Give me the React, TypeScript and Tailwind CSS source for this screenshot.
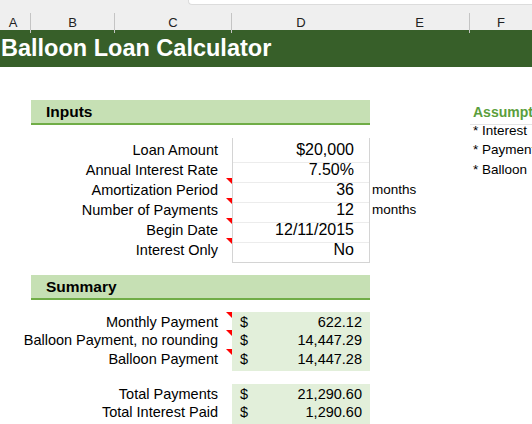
const cols = "grid grid-cols-[31px_84px_117px_138px_100px_1fr]";

function Marker() {
	return (
		<span className="absolute right-0 top-0 h-0 w-0 border-l-[6px] border-t-[6px] border-l-transparent border-t-[#ff0000]" />
	);
}

const inputs = [
	{ label: "Loan Amount", value: "$20,000", note: "", mark: false },
	{ label: "Annual Interest Rate", value: "7.50%", note: "", mark: false },
	{ label: "Amortization Period", value: "36", note: "months", mark: true },
	{ label: "Number of Payments", value: "12", note: "months", mark: true },
	{ label: "Begin Date", value: "12/11/2015", note: "", mark: true },
	{ label: "Interest Only", value: "No", note: "", mark: true },
];

const summary = [
	{ label: "Monthly Payment", value: "622.12", h: "h-[18px]" },
	{ label: "Balloon Payment, no rounding", value: "14,447.29", h: "h-[19px]" },
	{ label: "Balloon Payment", value: "14,447.28", h: "h-[18px]" },
];

const totals = [
	{ label: "Total Payments", value: "21,290.60", h: "h-[18px]" },
	{ label: "Total Interest Paid", value: "1,290.60", h: "h-[19px]" },
];

function SectionHeader({ title, side }: { title: string; side?: boolean }) {
	return (
		<div className={`${cols} h-[21px]`}>
			<div />
			<div className="col-span-3 flex items-center border-b-2 border-[#70ad47] bg-[#c6e0b4] pl-[15px] text-[15.5px] font-bold text-black">
				{title}
			</div>
			<div />
			{side ? (
				<div className="flex items-center overflow-hidden border-b border-[#e4e4e4] pl-[3px] text-[14px] font-bold whitespace-nowrap text-[#5a9e3c]">
					Assumptions
				</div>
			) : (
				<div />
			)}
		</div>
	);
}

function SummaryRow({ label, value, h, mark }: { label: string; value: string; h: string; mark: boolean }) {
	return (
		<div className={`${cols} ${h}`}>
			<div />
			<div className="relative col-span-2 flex items-center justify-end pr-[14px] whitespace-nowrap">
				{label}
				{mark && <Marker />}
			</div>
			<div className="flex items-center justify-between bg-[#e2efda] pl-[8px] pr-[8px]">
				<span>$</span>
				<span>{value}</span>
			</div>
			<div />
			<div />
		</div>
	);
}

export default function App() {
	return (
		<div className="h-[424px] w-[532px] overflow-hidden bg-white font-['Liberation_Sans',Arial,sans-serif] text-[14.5px] text-black">
			{/* column headers */}
			<div className="relative h-[30px] bg-[#efefef]">
				<div className="absolute right-0 top-0 h-[5px] w-[344px] rounded-bl-[4px] border-b border-l border-[#dcdcdc] bg-white" />
				<div className={`${cols} h-full pt-[13px] text-[13px] text-[#222]`}>
					<div className="flex items-center justify-center border-r border-[#c4c4c4] pr-[4px]">A</div>
					<div className="flex items-center justify-center border-r border-[#c4c4c4]">B</div>
					<div className="flex items-center justify-center border-r border-[#c4c4c4]">C</div>
					<div className="flex items-center justify-center">D</div>
					<div className="flex items-center justify-center border-r border-[#c4c4c4]">E</div>
					<div className="flex items-center justify-center">F</div>
				</div>
			</div>

			{/* title */}
			<div className="flex h-[37px] items-center bg-[#375f29] pl-[1px] text-[23.5px] font-bold text-white">
				Balloon Loan Calculator
			</div>

			<div className="h-[33px]" />
			<SectionHeader title="Inputs" side />
			<div className={`${cols} h-[17px]`}>
				<div />
				<div />
				<div />
				<div />
				<div />
				<div className="flex items-center pl-[3px] text-[13.5px] whitespace-nowrap">* Interest</div>
			</div>

			{inputs.map((r, i) => (
				<div key={r.label} className={`${cols} h-[20px]`}>
					<div />
					<div className="relative col-span-2 flex items-center justify-end pr-[14px] whitespace-nowrap">
						{r.label}
						{r.mark && <Marker />}
					</div>
					<div
						className={`flex items-center justify-end border-x border-[#d4d4d4] pr-[15px] text-[16px] ${
							i < inputs.length - 1 ? "border-b border-b-[#ececec]" : "border-b border-b-[#d4d4d4]"
						}`}
					>
						{r.value}
					</div>
					<div className="flex items-center pl-[2px] text-[13.5px]">{r.note}</div>
					<div className="flex items-center overflow-hidden pl-[3px] text-[13.5px] whitespace-nowrap">
						{i === 0 ? "* Payment" : i === 1 ? "* Balloon" : ""}
					</div>
				</div>
			))}

			<div className="h-[17px]" />
			<SectionHeader title="Summary" />
			<div className="h-[16px]" />

			{summary.map((r) => (
				<SummaryRow key={r.label} {...r} mark />
			))}

			<div className="h-[17px]" />

			{totals.map((r) => (
				<SummaryRow key={r.label} {...r} mark={false} />
			))}
		</div>
	);
}
